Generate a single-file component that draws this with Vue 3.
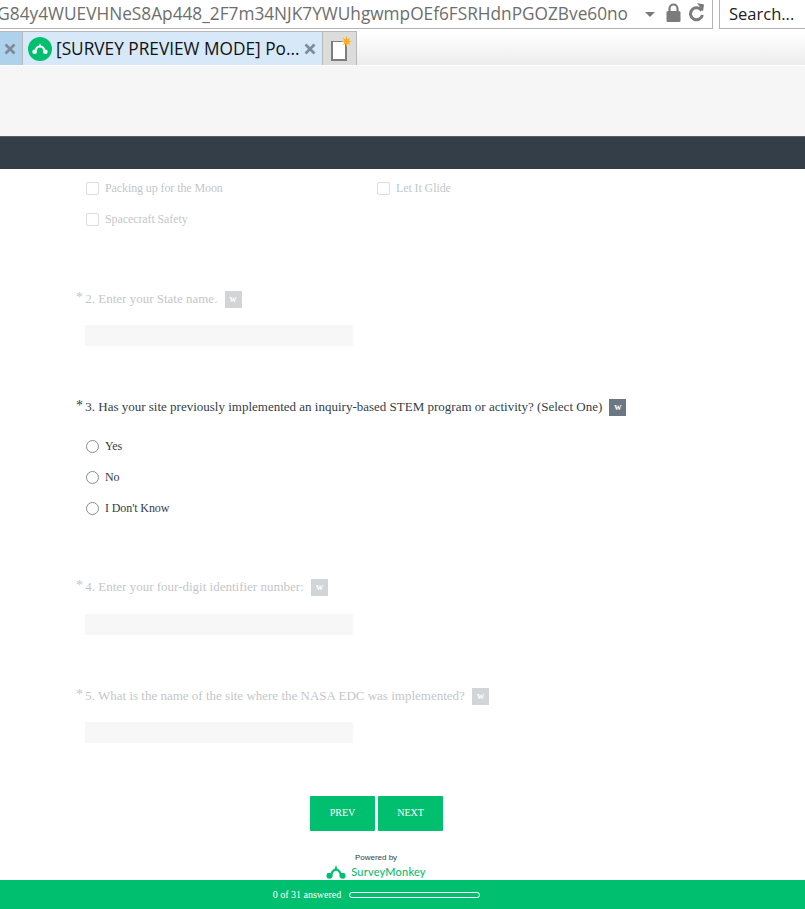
<script setup>
const topChoices = [
  { label: 'Packing up for the Moon', col: 1 },
  { label: 'Let It Glide', col: 2 },
  { label: 'Spacecraft Safety', col: 1 }
]
const radios = ['Yes', 'No', "I Don't Know"]
</script>

<template>
  <div class="page">
    <div class="addressbar">
      <div class="urlbox">
        <span class="urltext">G84y4WUEVHNeS8Ap448_2F7m34NJK7YWUhgwmpOEf6FSRHdnPGOZBve60no</span>
        <svg class="caret" width="10" height="5" viewBox="0 0 10 5"><path d="M0 0h10L5 5z" fill="#7a7a7a" /></svg>
        <svg class="lock" width="15" height="19" viewBox="0 0 15 19">
          <path d="M3.5 9V5.500a4 4 0 0 1 8 0V9" fill="none" stroke="#7b7b7b" stroke-width="2.200" />
          <rect x="0.500" y="8" width="14" height="11" rx="1.500" fill="#7b7b7b" />
        </svg>
        <svg class="reload" width="17" height="19" viewBox="0 0 17 19">
          <path d="M13.600 7.600A6 6 0 1 0 14.400 12" fill="none" stroke="#7b7b7b" stroke-width="3" />
          <path d="M9 0l7 1.500-1 7z" fill="#7b7b7b" />
        </svg>
      </div>
      <div class="searchbox">Search...</div>
    </div>

    <div class="tabstrip">
      <div class="tab tab-prev">
        <svg class="close" width="12" height="12" viewBox="0 0 12 12"><path d="M1.500 1.500l9 9M10.500 1.500l-9 9" stroke="#7e8a96" stroke-width="2.600" /></svg>
      </div>
      <div class="tab tab-active">
        <svg class="favicon" width="24" height="24" viewBox="0 0 24 24">
          <circle cx="12" cy="12" r="12" fill="#00bf6f" />
          <path d="M7.500 15.500C7.500 11.500 9.500 9.500 12 9.500s4.500 2 4.500 6" fill="none" stroke="#fff" stroke-width="2" />
          <circle cx="6.600" cy="14.800" r="2.300" fill="#fff" />
          <circle cx="17.400" cy="14.800" r="2.300" fill="#fff" />
          <path d="M12 6.200l1.500 3.600h-3z" fill="#fff" />
        </svg>
        <span class="tabtitle">[SURVEY PREVIEW MODE] Po...</span>
        <svg class="close" width="12" height="12" viewBox="0 0 12 12"><path d="M1.500 1.500l9 9M10.500 1.500l-9 9" stroke="#7e8a96" stroke-width="2.600" /></svg>
      </div>
      <div class="tab tab-new">
        <span class="newpage"></span>
        <svg class="spark" width="11" height="11" viewBox="0 0 22 22">
          <polygon points="11,0 13,7 19,3 15,9 22,11 15,13 19,19 13,15 11,22 9,15 3,19 7,13 0,11 7,9 3,3 9,7" fill="#fbac18" />
        </svg>
      </div>
    </div>

    <div class="toolbar"></div>
    <div class="navy"></div>

    <main class="survey">
      <section class="q1 dim">
        <div class="choicegrid">
          <label v-for="c in topChoices" :key="c.label" class="choice">
            <span class="check"></span>{{ c.label }}
          </label>
        </div>
      </section>

      <section class="q q2 dim">
        <div class="qtitle"><span class="req">*</span> 2. Enter your State name. <span class="w">w</span></div>
        <div class="field"></div>
      </section>

      <section class="q q3">
        <div class="qtitle"><span class="req">*</span> 3. Has your site previously implemented an inquiry-based STEM program or activity? (Select One) <span class="w">w</span></div>
        <div class="radios">
          <label v-for="r in radios" :key="r" class="choice">
            <span class="radio"></span>{{ r }}
          </label>
        </div>
      </section>

      <section class="q q4 dim">
        <div class="qtitle"><span class="req">*</span> 4. Enter your four-digit identifier number: <span class="w">w</span></div>
        <div class="field field-low"></div>
      </section>

      <section class="q q5 dim">
        <div class="qtitle"><span class="req">*</span> 5. What is the name of the site where the NASA EDC was implemented? <span class="w">w</span></div>
        <div class="field"></div>
      </section>

      <div class="buttons">
        <button class="btn">PREV</button>
        <button class="btn">NEXT</button>
      </div>

      <div class="powered">
        <div class="powered-by">Powered by</div>
        <div class="brand">
          <svg width="20" height="14" viewBox="0 0 24 17">
            <path d="M6 15C6 9.500 8.500 5.500 12 5.500S18 9.500 18 15" fill="none" stroke="#00bf6f" stroke-width="2.800" />
            <circle cx="4" cy="13" r="3.600" fill="#00bf6f" />
            <circle cx="20" cy="13" r="3.600" fill="#00bf6f" />
            <path d="M12 0l2.200 6.500h-4.400z" fill="#00bf6f" />
          </svg>
          <span class="brandname">SurveyMonkey</span>
        </div>
      </div>
    </main>

    <footer class="progress">
      <span>0 of 31 answered</span>
      <span class="track"></span>
    </footer>
  </div>
</template>

<style>
html, body { margin: 0; background: #fff; }
</style>

<style scoped>
.page {
  width: 805px;
  height: 909px;
  overflow: hidden;
  display: flex;
  flex-direction: column;
  background: #fff;
  font-family: "Liberation Serif", serif;
}
.addressbar {
  height: 29px;
  flex: none;
  display: flex;
  gap: 6px;
  background: #fff;
}
.urlbox {
  width: 713px;
  flex: none;
  box-sizing: border-box;
  display: flex;
  align-items: center;
  justify-content: flex-end;
  overflow: hidden;
  border-right: 1px solid #b4b4b4;
  border-bottom: 1px solid #b4b4b4;
  padding-right: 7px;
}
.urltext {
  font: 17.250px/28px "Open Sans", sans-serif;
  color: #6e6e6e;
  white-space: nowrap;
  margin-right: 17px;
  flex: none;
}
.caret { flex: none; margin-right: 11px; }
.lock { flex: none; margin-right: 7px; margin-bottom: 4px; }
.reload { flex: none; margin-bottom: 4px; }
.searchbox {
  flex: 1;
  box-sizing: border-box;
  border-left: 1px solid #b4b4b4;
  border-bottom: 1px solid #b4b4b4;
  padding-left: 9px;
  font: 16.500px/28px "Open Sans", sans-serif;
  color: #222;
}
.tabstrip {
  height: 37px;
  flex: none;
  box-sizing: border-box;
  padding-top: 2px;
  display: flex;
  background: linear-gradient(#fff 0, #fff 5px, #ececec 100%);
  border-bottom: 1px solid #fff;
}
.tab {
  box-sizing: border-box;
  border-top: 1px solid #b8b8b8;
  border-right: 1px solid #b8b8b8;
  display: flex;
  align-items: center;
  position: relative;
}
.tab-prev { width: 23px; background: #aed2ec; padding-left: 4px; }
.tab-active { width: 300px; background: #d7e9f9; padding-left: 5px; }
.tab-new { width: 34px; background: #dcdcdc; }
.close { flex: none; }
.favicon { flex: none; margin-right: 4px; }
.tabtitle {
  font: 17.250px/32px "Open Sans", sans-serif;
  color: #111;
  white-space: nowrap;
  flex: 1;
}
.tab-active .close { margin-right: 6px; }
.newpage {
  width: 16px;
  height: 20px;
  margin-left: 8px;
  margin-top: 4px;
  box-sizing: border-box;
  background: #fff;
  border: 1px solid #7d7d7d;
  border-width: 1px 2px 2px 2px;
}
.spark { position: absolute; left: 18px; top: 4px; }
.toolbar { height: 70px; flex: none; background: #f6f6f6; }
.navy {
  height: 33px;
  flex: none;
  box-sizing: border-box;
  background: #343e49;
  border-top: 1px solid #5a5f66;
}
.survey { flex: 1; display: flex; flex-direction: column; min-height: 0; }
.dim { opacity: 0.3; }
.q1 { padding: 12px 0 0 86px; }
.choicegrid {
  display: grid;
  grid-template-columns: 291px 1fr;
  row-gap: 17px;
}
.choice {
  display: flex;
  align-items: center;
  gap: 6px;
  font-size: 12px;
  line-height: 14px;
  color: #333e48;
  letter-spacing: -0.100px;
}
.check {
  width: 13px;
  height: 13px;
  box-sizing: border-box;
  border: 1px solid #8b9299;
  border-radius: 2px;
  flex: none;
}
.q { padding-left: 76px; }
.q2 { margin-top: 64px; }
.q3 { margin-top: 52px; }
.q4 { margin-top: 63px; }
.q5 { margin-top: 52px; }
.qtitle {
  font-size: 13px;
  line-height: 18px;
  color: #333e48;
  display: flex;
  align-items: center;
  white-space: pre;
}
.req { font-size: 14px; line-height: 14px; margin-top: -2px; margin-right: -1px; }
.w {
  width: 17px;
  height: 17px;
  margin-left: 4px;
  background: #6b7782;
  color: #fff;
  font: 700 10px/16px "Liberation Serif", serif;
  text-align: center;
  flex: none;
}
.field {
  width: 268px;
  height: 21px;
  margin: 17px 0 0 9px;
  background: #e5e5e5;
}
.field-low { margin-top: 18px; }
.radios {
  margin: 23px 0 0 10px;
  display: flex;
  flex-direction: column;
  gap: 17px;
}
.radio {
  width: 11px;
  height: 11px;
  border: 1px solid #868d94;
  border-radius: 50%;
  flex: none;
  box-sizing: content-box;
}
.buttons {
  margin-top: 53px;
  display: flex;
  justify-content: center;
  gap: 3px;
  padding-right: 52px;
}
.btn {
  width: 65px;
  height: 35px;
  padding: 0 0 2px;
  border: 0;
  border-radius: 1px;
  background: #00bf6f;
  color: #fff;
  font: 10px/33px "Liberation Serif", serif;
}
.powered {
  margin-top: 21px;
  display: flex;
  flex-direction: column;
  align-items: center;
  padding-right: 53px;
}
.powered-by {
  font: 8px/11px "Liberation Sans", sans-serif;
  color: #333e48;
}
.brand { display: flex; align-items: center; gap: 5px; height: 17px; }
.brandname {
  font: 500 11px/14px "Lato", sans-serif;
  color: #12b76f;
  letter-spacing: 0.200px;
}
.progress {
  height: 29px;
  flex: none;
  background: #00bf6f;
  display: flex;
  align-items: center;
  justify-content: center;
  gap: 8px;
  color: #fff;
  font-size: 10px;
  padding-right: 52px;
}
.track {
  width: 129px;
  height: 4px;
  border: 1px solid #fff;
  border-radius: 3px;
}
</style>
